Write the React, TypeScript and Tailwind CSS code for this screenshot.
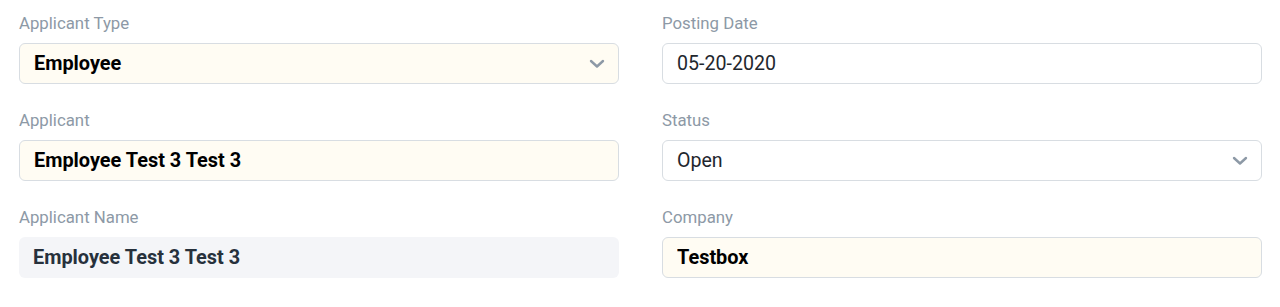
import React from "react";

type Field = {
    label: string;
    value: string;
    kind: "select" | "input" | "readonly";
    bold?: boolean;
    mandatory?: boolean;
};

const left: Field[] = [
    { label: "Applicant Type", value: "Employee", kind: "select", bold: true, mandatory: true },
    { label: "Applicant", value: "Employee Test 3 Test 3", kind: "input", bold: true, mandatory: true },
    { label: "Applicant Name", value: "Employee Test 3 Test 3", kind: "readonly", bold: true },
];

const right: Field[] = [
    { label: "Posting Date", value: "05-20-2020", kind: "input" },
    { label: "Status", value: "Open", kind: "select" },
    { label: "Company", value: "Testbox", kind: "input", bold: true, mandatory: true },
];

function Chevron() {
    return (
        <svg width="16" height="10" viewBox="0 0 16 10" className="shrink-0">
            <polyline points="2,2 8,7.5 14,2" fill="none" stroke="#8d99a6" strokeWidth="2.4" strokeLinecap="round" strokeLinejoin="round" />
        </svg>
    );
}

function FormField({ field }: { field: Field }) {
    const base = "flex items-center h-[41px] rounded-md px-[14px]";
    let box = "";
    if (field.kind === "readonly") {
        box = "bg-[#f4f5f8] text-[#27313c]";
    } else {
        box = `border border-[#d8dde2] ${field.mandatory ? "bg-[#fffcf3] text-black" : "bg-white text-[#1f272e]"}`;
    }
    return (
        <div className="flex flex-col gap-2">
            <label className="text-[16.8px] leading-6 text-[#8d99a6]">{field.label}</label>
            <div className={`${base} ${box}`}>
                <span className={`flex-1 truncate ${field.bold ? "font-bold text-[19.9px]" : "text-[19.6px]"}`}>{field.value}</span>
                {field.kind === "select" && <span className="mr-[-1px]"><Chevron /></span>}
            </div>
        </div>
    );
}

export default function App() {
    return (
        <div className="bg-white w-[1280px] h-[307px] pt-[11px] pl-[19px] pr-[18px]" style={{ fontFamily: "Roboto, 'Liberation Sans', sans-serif" }}>
            <div className="grid grid-cols-2 gap-x-[43px]">
                <div className="flex flex-col gap-6">
                    {left.map(f => <FormField key={f.label} field={f} />)}
                </div>
                <div className="flex flex-col gap-6">
                    {right.map(f => <FormField key={f.label} field={f} />)}
                </div>
            </div>
        </div>
    );
}
